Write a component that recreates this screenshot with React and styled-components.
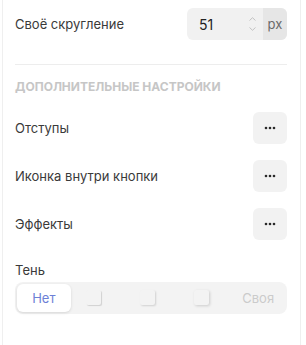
import React from 'react';
import styled, { createGlobalStyle } from 'styled-components';

const GlobalStyle = createGlobalStyle`
  body {
    margin: 0;
    background: #ffffff;
    font-family: Inter, 'Noto Sans', 'Liberation Sans', sans-serif;
    -webkit-font-smoothing: antialiased;
  }
`;

const Panel = styled.div`
  box-sizing: border-box;
  width: 299px;
  min-height: 345px;
  margin-left: 2px;
  padding: 8px 13px 0 12px;
  border-left: 1px solid #efefef;
  border-right: 1px solid #efefef;
`;

const Row = styled.div`
  display: flex;
  align-items: center;
  justify-content: space-between;
  height: 32px;
  margin-bottom: ${({ gap }) => gap || 0}px;
`;

const Label = styled.span`
  font-size: 13px;
  line-height: 16px;
  color: #3a3a3a;
`;

const NumberField = styled.div`
  display: flex;
  width: 100px;
  height: 32px;
  border-radius: 6px;
  overflow: hidden;
  background: #f1f1f1;
`;

const NumberValue = styled.div`
  flex: 1;
  display: flex;
  align-items: center;
  padding-left: 12px;
  font-size: 14px;
  color: #222;
`;

const Spinner = styled.div`
  display: flex;
  flex-direction: column;
  justify-content: center;
  gap: 6px;
  padding-right: 7px;
`;

const Unit = styled.div`
  display: flex;
  align-items: center;
  justify-content: center;
  width: 24px;
  background: #e6e6e6;
  font-size: 13px;
  color: #6a6a6a;
`;

const Divider = styled.div`
  height: 1px;
  background: #ededed;
  margin: 24px 0 14px;
`;

const Heading = styled.div`
  font-size: 12px;
  line-height: 16px;
  font-weight: 700;
  color: #c6c6c6;
  margin-bottom: 17px;
`;

const DotsButton = styled.button`
  display: flex;
  align-items: center;
  justify-content: center;
  width: 34px;
  height: 32px;
  padding: 0;
  border: none;
  border-radius: 6px;
  background: #f2f2f2;
`;

const FieldTitle = styled.div`
  font-size: 13px;
  line-height: 16px;
  color: #3a3a3a;
  margin: 22px 0 4px;
`;

const Segmented = styled.div`
  display: grid;
  grid-template-columns: repeat(5, 1fr);
  height: 32px;
  padding: 2px;
  box-sizing: border-box;
  border-radius: 8px;
  background: #f3f3f3;
`;

const Segment = styled.div`
  display: flex;
  align-items: center;
  justify-content: center;
  border-radius: 6px;
  font-size: 13px;
  color: ${({ active }) => (active ? '#6d80d6' : '#cbcbcb')};
  background: ${({ active }) => (active ? '#ffffff' : 'transparent')};
  box-shadow: ${({ active }) => (active ? '0 1px 3px rgba(0,0,0,0.12)' : 'none')};
`;

const ShadowSwatch = styled.div`
  width: 15px;
  height: 15px;
  margin: 0 7px 2px 0;
  border-radius: 2px;
  background: #f3f3f3;
  box-shadow: ${({ shadow }) => shadow};
`;

const Chevron = ({ up }) => (
  <svg width="7" height="4" viewBox="0 0 7 4" fill="none">
    <path
      d={up ? 'M0.5 3.5L3.5 0.7L6.5 3.5' : 'M0.5 0.5L3.5 3.3L6.5 0.5'}
      stroke="#bdbdbd"
      strokeWidth="0.9"
    />
  </svg>
);

const Dots = () => (
  <svg width="12" height="4" viewBox="0 0 12 4">
    <circle cx="2" cy="2" r="1.3" fill="#2a2a2a" />
    <circle cx="6" cy="2" r="1.3" fill="#2a2a2a" />
    <circle cx="10" cy="2" r="1.3" fill="#2a2a2a" />
  </svg>
);

const options = ['Отступы', 'Иконка внутри кнопки', 'Эффекты'];

const shadows = [
  '1px 1px 1px rgba(0,0,0,0.14)',
  '1px 1px 2px rgba(0,0,0,0.14)',
  '1px 1px 3px rgba(0,0,0,0.16)',
];

export default function App() {
  return (
    <>
      <GlobalStyle />
      <Panel>
        <Row>
          <Label>Своё скругление</Label>
          <NumberField>
            <NumberValue>51</NumberValue>
            <Spinner>
              <Chevron up />
              <Chevron />
            </Spinner>
            <Unit>px</Unit>
          </NumberField>
        </Row>

        <Divider />
        <Heading>ДОПОЛНИТЕЛЬНЫЕ НАСТРОЙКИ</Heading>

        {options.map((name, i) => (
          <Row key={name} gap={i < options.length - 1 ? 16 : 0}>
            <Label>{name}</Label>
            <DotsButton>
              <Dots />
            </DotsButton>
          </Row>
        ))}

        <FieldTitle>Тень</FieldTitle>
        <Segmented>
          <Segment active>Нет</Segment>
          {shadows.map(s => (
            <Segment key={s}>
              <ShadowSwatch shadow={s} />
            </Segment>
          ))}
          <Segment>Своя</Segment>
        </Segmented>
      </Panel>
    </>
  );
}
